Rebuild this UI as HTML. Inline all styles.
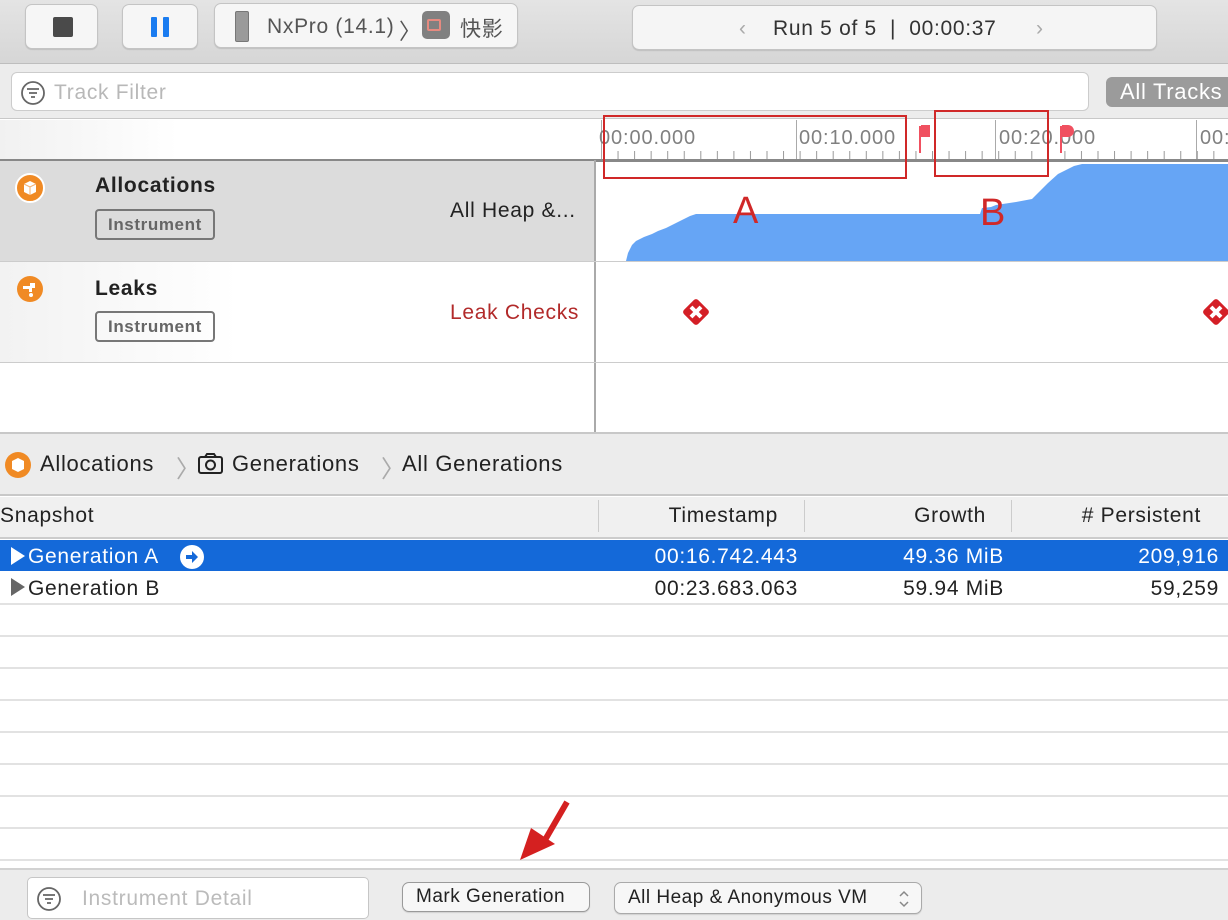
<!DOCTYPE html>
<html><head><meta charset="utf-8"><style>
*{margin:0;padding:0;box-sizing:border-box}
body{width:1228px;height:920px;overflow:hidden;position:relative;background:#fff;font-family:"Liberation Sans","Noto Sans CJK SC",sans-serif;color:#222}
.a{position:absolute}
.btn{position:absolute;background:#f6f6f6;border:1px solid #c4c4c4;border-radius:7px;box-shadow:0 1px 1px rgba(0,0,0,.12)}
.tag{position:absolute;border:2px solid #777;border-radius:4px;font-size:17px;color:#666;padding:0 11px;height:31px;line-height:27px;font-weight:bold;letter-spacing:.6px}
.hl{position:absolute;left:0;width:1228px;height:2px;background:#e2e2e2}
.t{position:absolute;font-size:21px;letter-spacing:.7px;white-space:nowrap}
.r{position:absolute;font-size:21px;letter-spacing:.7px;white-space:nowrap;text-align:right}
</style></head><body>
<!-- toolbar -->
<div class="a" style="left:0;top:0;width:1228px;height:64px;background:linear-gradient(#e4e4e4,#d6d6d6);border-bottom:1px solid #bdbdbd"></div>
<div class="btn" style="left:25px;top:4px;width:73px;height:45px"><div class="a" style="left:27px;top:12px;width:20px;height:20px;background:#4a4a4a;border-radius:2px"></div></div>
<div class="btn" style="left:122px;top:4px;width:76px;height:45px"><div class="a" style="left:28px;top:12px;width:6px;height:20px;background:#1a7cf0;border-radius:1px"></div><div class="a" style="left:40px;top:12px;width:6px;height:20px;background:#1a7cf0;border-radius:1px"></div></div>
<div class="btn" style="left:214px;top:3px;width:304px;height:45px">
<div class="a" style="left:20px;top:7px;width:14px;height:31px;background:#9a9a9a;border:1px solid #777;border-radius:2px"></div>
<div class="t" style="left:52px;top:11px;color:#555">NxPro (14.1)</div>
<div class="t" style="left:184px;top:10px;color:#555;font-size:22px">〉</div>
<div class="a" style="left:207px;top:7px;width:28px;height:28px;background:#808080;border-radius:5px"><div class="a" style="left:5px;top:8px;width:14px;height:12px;border:2px solid #e68a80;border-radius:2px"></div></div>
<div class="t" style="left:245px;top:9px;color:#555">快影</div>
</div>
<div class="btn" style="left:632px;top:5px;width:525px;height:45px;background:#f5f5f5">
<div class="t" style="left:106px;top:11px;color:#aaa">‹</div>
<div class="t" style="left:140px;top:11px;color:#333">Run 5 of 5 &nbsp;| &nbsp;00:00:37</div>
<div class="t" style="left:403px;top:11px;color:#aaa">›</div>
</div>
<!-- filter row -->
<div class="a" style="left:0;top:64px;width:1228px;height:55px;background:#ececec;border-bottom:1px solid #c8c8c8"></div>
<div class="a" style="left:11px;top:72px;width:1078px;height:39px;background:#fff;border:1px solid #ccc;border-radius:6px"></div>
<svg class="a" style="left:20px;top:80px" width="26" height="26"><circle cx="13" cy="13" r="11" fill="none" stroke="#666" stroke-width="1.8"/><path d="M7 9h12M9 13h8M11 17h4" stroke="#666" stroke-width="1.8"/></svg>
<div class="t" style="left:54px;top:81px;color:#b8b8b8">Track Filter</div>
<div class="a" style="left:1106px;top:77px;width:130px;height:30px;background:#9b9b9b;border-radius:6px;color:#fff;font-size:22px;letter-spacing:.7px;line-height:30px;padding-left:14px;white-space:nowrap">All Tracks</div>
<!-- ruler -->
<div class="a" style="left:0;top:120px;width:595px;height:41px;background:linear-gradient(90deg,#f1f1f1,#fff 30%)"></div>
<svg class="a" style="left:596px;top:120px" width="632" height="42">
<defs><pattern id="tk" x="5" y="0" width="16.55" height="42" patternUnits="userSpaceOnUse"><line x1="0.5" y1="31" x2="0.5" y2="39" stroke="#999" stroke-width="1"/></pattern></defs>
<rect x="0" y="0" width="632" height="42" fill="url(#tk)"/>
<g stroke="#aaa"><line x1="5.5" y1="0" x2="5.5" y2="40"/><line x1="200.5" y1="0" x2="200.5" y2="40"/><line x1="399.5" y1="0" x2="399.5" y2="40"/><line x1="600.5" y1="0" x2="600.5" y2="40"/></g>
<g font-family="Liberation Sans" font-size="20" letter-spacing="0.9" fill="#808080"><text x="3" y="24">00:00.000</text><text x="203" y="24">00:10.000</text><text x="403" y="24">00:20.000</text><text x="604" y="24">00:</text></g>
<rect x="0" y="39" width="632" height="3" fill="#888"/>
</svg>
<div class="a" style="left:0;top:159px;width:596px;height:2px;background:#888"></div>
<!-- allocations row -->
<div class="a" style="left:0;top:161px;width:595px;height:100px;background:#dcdcdc"></div>
<svg class="a" style="left:14px;top:172px" width="32" height="32"><circle cx="16" cy="16" r="14" fill="#f08a24" stroke="#fff" stroke-width="2"/><path d="M10 12l6-3 6 3v8l-6 3-6-3z" fill="#fff"/><path d="M10 12l6 3 6-3M16 15v8" stroke="#f4b070" stroke-width="1" fill="none"/></svg>
<div class="t" style="left:95px;top:174px;font-weight:bold;color:#222">Allocations</div>
<div class="tag" style="left:95px;top:209px">Instrument</div>
<div class="t" style="left:450px;top:199px;color:#222">All Heap &amp;...</div>
<svg class="a" style="left:596px;top:161px" width="632" height="100">
<path d="M30 100 L32 92 L36 84 L40 80 L48 76 L56 73 L62 70 L70 67 L80 62 L88 58 L94 55 L100 53 L384 53 L386 47 L395 46 L400 44 L420 41 L436 38 L444 30 L452 22 L462 13 L472 8 L478 5 L486 3 L632 3 L632 100Z" fill="#66a5f5"/>
</svg>
<div class="a" style="left:594px;top:160px;width:2px;height:272px;background:#aaa"></div>
<div class="a" style="left:0;top:261px;width:1228px;height:1px;background:#ccc"></div>
<!-- leaks row -->
<div class="a" style="left:0;top:262px;width:594px;height:100px;background:linear-gradient(90deg,#f2f2f2,#fff 40%)"></div>
<svg class="a" style="left:15px;top:274px" width="32" height="32"><circle cx="15" cy="15" r="13" fill="#f08a24"/><path d="M8 12h7v-3h5v5h-3v4h-3v-3h-6z" fill="#fff"/><circle cx="16" cy="21" r="2" fill="#fff"/></svg>
<div class="t" style="left:95px;top:277px;font-weight:bold">Leaks</div>
<div class="tag" style="left:95px;top:311px">Instrument</div>
<div class="t" style="left:450px;top:301px;color:#b22a2a">Leak Checks</div>
<svg class="a" style="left:681px;top:297px" width="30" height="30"><rect x="5" y="5" width="20" height="20" rx="3" transform="rotate(45 15 15)" fill="#d41f26"/><path d="M10 10l10 10M20 10l-10 10" stroke="#fff" stroke-width="4"/></svg>
<svg class="a" style="left:1201px;top:297px" width="30" height="30"><rect x="5" y="5" width="20" height="20" rx="3" transform="rotate(45 15 15)" fill="#d41f26"/><path d="M10 10l10 10M20 10l-10 10" stroke="#fff" stroke-width="4"/></svg>
<div class="a" style="left:0;top:362px;width:1228px;height:1px;background:#ccc"></div>
<!-- annotations -->
<div class="a" style="left:603px;top:115px;width:304px;height:64px;border:2px solid #d02828"></div>
<div class="a" style="left:934px;top:110px;width:115px;height:67px;border:2px solid #d02828"></div>
<div class="t" style="left:733px;top:190px;font-size:38px;color:#d02828">A</div>
<div class="t" style="left:980px;top:192px;font-size:38px;color:#d02828">B</div>
<svg class="a" style="left:916px;top:122px" width="160" height="40"><path d="M4 4v27" stroke="#f05060" stroke-width="2"/><path d="M5 3h9v12h-9z" fill="#f05060"/><path d="M145 4v27" stroke="#f05060" stroke-width="2"/><path d="M146 3h6a6 6 0 0 1 0 12h-6z" fill="#f05060"/></svg>
<!-- breadcrumb -->
<div class="a" style="left:0;top:432px;width:1228px;height:64px;background:#ececec;border-top:2px solid #c8c8c8;border-bottom:2px solid #c8c8c8"></div>
<svg class="a" style="left:3px;top:450px" width="30" height="30"><circle cx="15" cy="15" r="13" fill="#f08a24"/><path d="M9 11l6-3 6 3v8l-6 3-6-3z" fill="#fff"/></svg>
<div class="t" style="left:40px;top:451px;font-size:22px">Allocations</div>
<div class="t" style="left:176px;top:449px;font-size:24px;color:#aaa">〉</div>
<svg class="a" style="left:197px;top:452px" width="28" height="24"><rect x="2" y="5" width="23" height="16" rx="2" fill="none" stroke="#222" stroke-width="2"/><path d="M8 5l2-3h7l2 3" fill="none" stroke="#222" stroke-width="2"/><circle cx="13.5" cy="13" r="4.5" fill="none" stroke="#222" stroke-width="2"/></svg>
<div class="t" style="left:232px;top:451px;font-size:22px">Generations</div>
<div class="t" style="left:381px;top:449px;font-size:24px;color:#aaa">〉</div>
<div class="t" style="left:402px;top:451px;font-size:22px">All Generations</div>
<!-- table header -->
<div class="a" style="left:0;top:497px;width:1228px;height:42px;background:#f0f0f0;border-bottom:2px solid #ccc"></div>
<div class="t" style="left:0;top:504px">Snapshot</div>
<div class="a" style="left:598px;top:500px;width:1px;height:32px;background:#ccc"></div>
<div class="a" style="left:804px;top:500px;width:1px;height:32px;background:#ccc"></div>
<div class="a" style="left:1011px;top:500px;width:1px;height:32px;background:#ccc"></div>
<div class="r" style="left:600px;width:178px;top:504px">Timestamp</div>
<div class="r" style="left:806px;width:180px;top:504px">Growth</div>
<div class="r" style="left:1013px;width:188px;top:504px"># Persistent</div>
<!-- rows -->
<div class="a" style="left:0;top:540px;width:1228px;height:31px;background:#1469d9"></div>
<svg class="a" style="left:10px;top:546px" width="16" height="20"><path d="M1 1l14 9-14 9z" fill="#fff"/></svg>
<div class="t" style="left:28px;top:545px;color:#fff">Generation A</div>
<svg class="a" style="left:179px;top:544px" width="26" height="26"><circle cx="13" cy="13" r="12" fill="#fff"/><path d="M7 11h6v-4l6 6-6 6v-4h-6z" fill="#1469d9"/></svg>
<div class="r" style="left:600px;width:198px;top:545px;color:#fff">00:16.742.443</div>
<div class="r" style="left:806px;width:198px;top:545px;color:#fff">49.36 MiB</div>
<div class="r" style="left:1013px;width:206px;top:545px;color:#fff">209,916</div>
<svg class="a" style="left:10px;top:577px" width="16" height="20"><path d="M1 1l14 9-14 9z" fill="#666"/></svg>
<div class="t" style="left:28px;top:577px">Generation B</div>
<div class="r" style="left:600px;width:198px;top:577px">00:23.683.063</div>
<div class="r" style="left:806px;width:198px;top:577px">59.94 MiB</div>
<div class="r" style="left:1013px;width:206px;top:577px">59,259</div>
<div class="hl" style="top:603px"></div><div class="hl" style="top:635px"></div><div class="hl" style="top:667px"></div><div class="hl" style="top:699px"></div><div class="hl" style="top:731px"></div><div class="hl" style="top:763px"></div><div class="hl" style="top:795px"></div><div class="hl" style="top:827px"></div><div class="hl" style="top:859px"></div>
<!-- arrow -->
<svg class="a" style="left:515px;top:798px" width="60" height="68"><path d="M52 4L30 42" stroke="#d42020" stroke-width="6"/><path d="M5 62L16 30L40 46z" fill="#d42020"/></svg>
<!-- bottom bar -->
<div class="a" style="left:0;top:868px;width:1228px;height:52px;background:#ececec;border-top:2px solid #d2d2d2"></div>
<div class="a" style="left:27px;top:877px;width:342px;height:42px;background:#fff;border:1px solid #c6c6c6;border-radius:5px"></div>
<svg class="a" style="left:36px;top:886px" width="26" height="26"><circle cx="13" cy="13" r="11" fill="none" stroke="#666" stroke-width="1.8"/><path d="M7 9h12M9 13h8M11 17h4" stroke="#666" stroke-width="1.8"/></svg>
<div class="t" style="left:82px;top:887px;color:#bbb">Instrument Detail</div>
<div class="btn" style="left:402px;top:882px;width:188px;height:30px;background:#f7f7f7;border-color:#9a9a9a"><div class="t" style="left:13px;top:3px;font-size:19px;letter-spacing:.5px">Mark Generation</div></div>
<div class="btn" style="left:614px;top:882px;width:308px;height:32px;background:#f7f7f7;border-color:#aaa"><div class="t" style="left:13px;top:4px;font-size:19px;letter-spacing:.5px">All Heap &amp; Anonymous VM</div><svg class="a" style="left:282px;top:5px" width="14" height="22"><path d="M3 8l4-4 4 4M3 14l4 4 4-4" fill="none" stroke="#888" stroke-width="1.5"/></svg></div>
</body></html>
